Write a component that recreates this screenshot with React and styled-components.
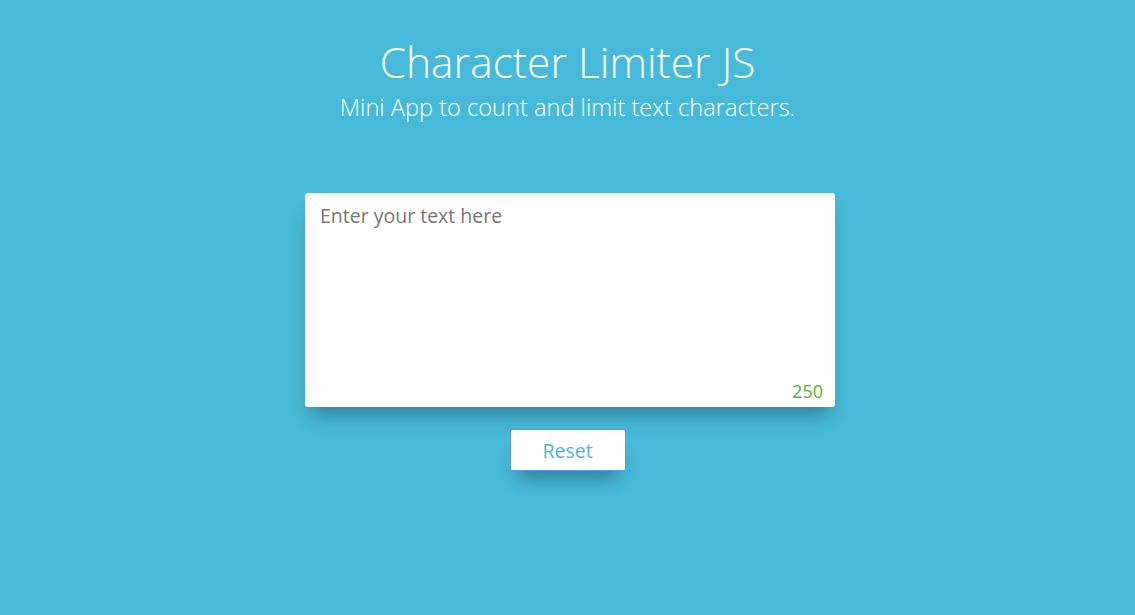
import React, { useState } from "react";
import styled, { createGlobalStyle } from "styled-components";

const Global = createGlobalStyle`
  html, body { margin: 0; padding: 0; }
  body {
    background: #46bad8;
    font-family: "Open Sans", "Noto Sans", sans-serif;
    min-height: 615px;
  }
`;

const Page = styled.main`
  display: flex;
  flex-direction: column;
  align-items: center;
  padding-top: 34px;
`;

const Title = styled.h1`
  margin: 0;
  font-weight: 300;
  font-size: 42.5px;
  line-height: 56px;
  color: #ffffff;
`;

const Subtitle = styled.p`
  margin: 0;
  font-weight: 300;
  font-size: 23.6px;
  line-height: 34px;
  color: #ffffff;
`;

const Card = styled.div`
  position: relative;
  margin-top: 69px;
  margin-left: 5px;
  width: 530px;
  height: 214px;
  background: #ffffff;
  border-radius: 3px;
  box-shadow: 0 14px 18px -6px rgba(0, 0, 0, 0.3);
`;

const TextArea = styled.textarea`
  box-sizing: border-box;
  display: block;
  width: 100%;
  height: 100%;
  border: none;
  outline: none;
  resize: none;
  background: transparent;
  padding: 9px 15px;
  font-family: inherit;
  font-size: 19.5px;
  line-height: 28px;
  color: #444;
  &::placeholder {
    color: #777777;
  }
`;

const Counter = styled.span`
  position: absolute;
  right: 12px;
  bottom: 4px;
  font-size: 18px;
  line-height: 24px;
  color: ${(p) => (p.$over ? "#d9534f" : "#58b030")};
`;

const ResetButton = styled.button`
  margin-top: 22px;
  width: 116px;
  height: 42px;
  background: #ffffff;
  border: 1px solid #5d93f2;
  border-radius: 2px;
  font-family: inherit;
  font-size: 19.5px;
  color: #46bad8;
  cursor: pointer;
  box-shadow: 0 16px 18px -8px rgba(0, 0, 0, 0.3);
`;

export default function App() {
  const [text, setText] = useState("");
  const limit = 250;
  return (
    <>
      <Global />
      <Page>
        <Title>Character Limiter JS</Title>
        <Subtitle>Mini App to count and limit text characters.</Subtitle>
        <Card>
          <TextArea
            placeholder="Enter your text here"
            value={text}
            maxLength={limit}
            onChange={(e) => setText(e.target.value)}
          />
          <Counter $over={text.length >= limit}>{limit - text.length}</Counter>
        </Card>
        <ResetButton onClick={() => setText("")}>Reset</ResetButton>
      </Page>
    </>
  );
}
